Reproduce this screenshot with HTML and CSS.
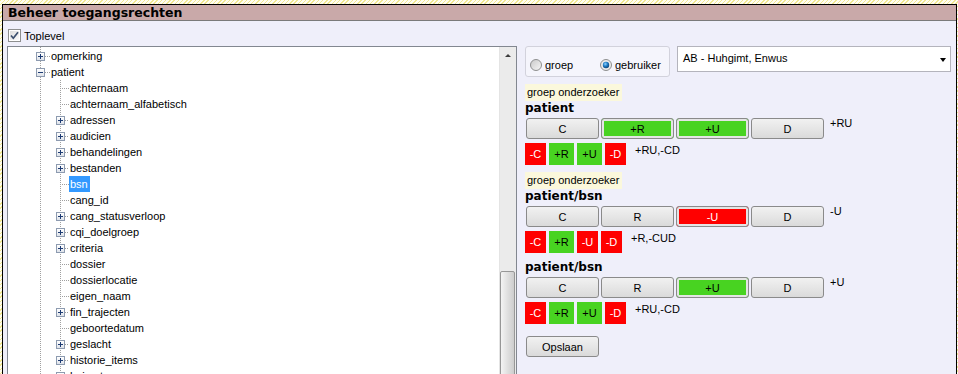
FILE: index.html
```html
<!DOCTYPE html>
<html>
  <head>
    <title>Beheer toegangsrechten</title>
    <link rel="stylesheet" href="styles.css">
  </head>
  <body>
    <div class="window">
      <div class="titlebar">Beheer toegangsrechten</div>

      <div class="toplevel">
        <svg class="check" width="13" height="13" viewBox="0 0 13 13">
          <defs>
            <linearGradient id="cbg" x1="0" y1="0" x2="1" y2="1">
              <stop offset="0" stop-color="#dcdcdc" />
              <stop offset="1" stop-color="#fbfbfb" />
            </linearGradient>
          </defs>
          <rect x="0.5" y="0.5" width="12" height="12" fill="#fff" stroke="#8e8f8f" />
          <rect x="2" y="2" width="9" height="9" fill="url(#cbg)" />
          <path d="M3 6.5 L5.3 9.2 L10 3.2" fill="none" stroke="#3b4f6e" stroke-width="1.7" />
        </svg>
        <span>Toplevel</span>
      </div>

      <div class="main">
        <!-- Tree with fields -->
        <div class="treebox">
          <ul class="tree">
            <li class="row d1"><span class="exp plus"></span><span class="dash"></span><span class="lbl">opmerking</span></li>
            <li class="row d1"><span class="exp"></span><span class="dash"></span><span class="lbl">patient</span></li>
            <li>
              <ul class="sub">
                <li class="row d2"><span class="stub"></span><span class="lbl">achternaam</span></li>
                <li class="row d2"><span class="stub"></span><span class="lbl">achternaam_alfabetisch</span></li>
                <li class="row d2"><span class="exp plus"></span><span class="dash"></span><span class="lbl">adressen</span></li>
                <li class="row d2"><span class="exp plus"></span><span class="dash"></span><span class="lbl">audicien</span></li>
                <li class="row d2"><span class="exp plus"></span><span class="dash"></span><span class="lbl">behandelingen</span></li>
                <li class="row d2"><span class="exp plus"></span><span class="dash"></span><span class="lbl">bestanden</span></li>
                <li class="row d2"><span class="stub"></span><span class="lbl selected">bsn</span></li>
                <li class="row d2"><span class="stub"></span><span class="lbl">cang_id</span></li>
                <li class="row d2"><span class="exp plus"></span><span class="dash"></span><span class="lbl">cang_statusverloop</span></li>
                <li class="row d2"><span class="exp plus"></span><span class="dash"></span><span class="lbl">cqi_doelgroep</span></li>
                <li class="row d2"><span class="exp plus"></span><span class="dash"></span><span class="lbl">criteria</span></li>
                <li class="row d2"><span class="stub"></span><span class="lbl">dossier</span></li>
                <li class="row d2"><span class="stub"></span><span class="lbl">dossierlocatie</span></li>
                <li class="row d2"><span class="stub"></span><span class="lbl">eigen_naam</span></li>
                <li class="row d2"><span class="exp plus"></span><span class="dash"></span><span class="lbl">fin_trajecten</span></li>
                <li class="row d2"><span class="stub"></span><span class="lbl">geboortedatum</span></li>
                <li class="row d2"><span class="exp plus"></span><span class="dash"></span><span class="lbl">geslacht</span></li>
                <li class="row d2"><span class="exp plus"></span><span class="dash"></span><span class="lbl">historie_items</span></li>
                <li class="row d2"><span class="exp plus"></span><span class="dash"></span><span class="lbl">huisarts</span></li>
              </ul>
            </li>
          </ul>
          <div class="scrollbar">
            <div class="arrow-up"></div>
            <div class="thumb"></div>
          </div>
        </div>

        <!-- Rights editor -->
        <div class="rights">
          <div class="topbar">
            <div class="groupbox">
              <label class="option">
                <svg width="12" height="12" viewBox="0 0 12 12">
                  <defs>
                    <linearGradient id="rbg" x1="0" y1="0" x2="1" y2="1">
                      <stop offset="0" stop-color="#c8c8c8" />
                      <stop offset="1" stop-color="#f8f8f8" />
                    </linearGradient>
                  </defs>
                  <circle cx="6" cy="6" r="5.5" fill="url(#rbg)" stroke="#8e8f8f" />
                </svg>
                <span>groep</span>
              </label>
              <label class="option">
                <svg width="12" height="12" viewBox="0 0 12 12">
                  <defs>
                    <radialGradient id="rdot" cx="0.4" cy="0.35" r="0.7">
                      <stop offset="0" stop-color="#8fd3ff" />
                      <stop offset="0.5" stop-color="#1d7bc4" />
                      <stop offset="1" stop-color="#0b3e6e" />
                    </radialGradient>
                  </defs>
                  <circle cx="6" cy="6" r="5.5" fill="#ececec" stroke="#8e8f8f" />
                  <circle cx="6" cy="6" r="3.2" fill="url(#rdot)" />
                </svg>
                <span>gebruiker</span>
              </label>
            </div>
            <div class="select">
              <span>AB - Huhgimt, Enwus</span>
              <span class="caret"></span>
            </div>
          </div>

          <div class="block">
            <div class="tag">groep onderzoeker</div>
            <div class="heading">patient</div>
            <div class="crud">
              <button class="btn">C</button>
              <button class="btn on">+R</button>
              <button class="btn on">+U</button>
              <button class="btn">D</button>
              <span class="note">+RU</span>
            </div>
            <div class="flags">
              <span class="flag deny">-C</span>
              <span class="flag allow wide">+R</span>
              <span class="flag allow wide">+U</span>
              <span class="flag deny">-D</span>
              <span class="note">+RU,-CD</span>
            </div>
          </div>

          <div class="block">
            <div class="tag">groep onderzoeker</div>
            <div class="heading">patient/bsn</div>
            <div class="crud">
              <button class="btn">C</button>
              <button class="btn">R</button>
              <button class="btn off">-U</button>
              <button class="btn">D</button>
              <span class="note">-U</span>
            </div>
            <div class="flags">
              <span class="flag deny">-C</span>
              <span class="flag allow wide">+R</span>
              <span class="flag deny">-U</span>
              <span class="flag deny">-D</span>
              <span class="note">+R,-CUD</span>
            </div>
          </div>

          <div class="block">
            <div class="heading">patient/bsn</div>
            <div class="crud">
              <button class="btn">C</button>
              <button class="btn">R</button>
              <button class="btn on">+U</button>
              <button class="btn">D</button>
              <span class="note">+U</span>
            </div>
            <div class="flags">
              <span class="flag deny">-C</span>
              <span class="flag allow wide">+R</span>
              <span class="flag allow wide">+U</span>
              <span class="flag deny">-D</span>
              <span class="note">+RU,-CD</span>
            </div>
          </div>

          <button class="btn save">Opslaan</button>
        </div>
      </div>
    </div>
  </body>
</html>
```

FILE: styles.css
```css
:root {
  --panel-bg: #efeffa;
  --title-bg: #c9a9a9;
  --green: #48d321;
  --red: #ff0000;
  --dots: #a0a0a0;
}

html,
body {
  height: 100%;
}

body {
  margin: 0;
  overflow: hidden;
  font-family: "Liberation Sans", Arial, sans-serif;
  font-size: 11px;
  color: #000;
  background: repeating-linear-gradient(135deg, #f1e892 0 1px, #fffdf0 1px 3px);
}

/* Window frame */
.window {
  display: flex;
  flex-direction: column;
  height: calc(100% - 5px);
  margin: 4px 1px 0 2px;
  border: 1px solid #000;
  border-bottom: none;
  background: var(--panel-bg);
}

.titlebar {
  height: 15px;
  line-height: 15px;
  padding-left: 5px;
  background: var(--title-bg);
  border-bottom: 1px solid #7a7a7a;
  font: bold 12.5px "DejaVu Sans", Verdana, sans-serif;
}

.toplevel {
  display: flex;
  align-items: center;
  gap: 3px;
  height: 25px;
  box-sizing: border-box;
  padding: 4px 0 0 5px;
}

.check {
  display: block;
}

.main {
  display: flex;
  flex: 1;
  min-height: 0;
  padding-left: 4px;
}

/* Tree view */
.treebox {
  display: flex;
  width: 510px;
  box-sizing: border-box;
  border: 1px solid #828790;
  border-bottom: none;
  background: #fff;
  overflow: hidden;
}

.tree,
.sub {
  list-style: none;
  margin: 0;
  padding: 0;
}

.tree {
  flex: 1;
  padding-top: 1px;
  background: linear-gradient(var(--dots) 50%, transparent 50%) 32px 0 / 1px 2px repeat-y;
}

.sub {
  background: linear-gradient(var(--dots) 50%, transparent 50%) 52px 0 / 1px 2px repeat-y;
}

.row {
  display: flex;
  align-items: center;
  height: 16px;
  white-space: nowrap;
}

.row.d1 {
  padding-left: 28px;
}

.row.d2 {
  padding-left: 48px;
}

.exp {
  position: relative;
  width: 9px;
  height: 9px;
  box-sizing: border-box;
  border: 1px solid #8d9bb0;
  background: linear-gradient(#ffffff, #dfe3ea);
}

.exp::before {
  content: "";
  position: absolute;
  left: 1px;
  top: 3px;
  width: 5px;
  height: 1px;
  background: #1d3b73;
}

.exp.plus::after {
  content: "";
  position: absolute;
  left: 3px;
  top: 1px;
  width: 1px;
  height: 5px;
  background: #1d3b73;
}

.dash,
.stub {
  height: 1px;
  background: linear-gradient(to right, var(--dots) 50%, transparent 50%) 0 0 / 2px 1px repeat-x;
}

.d1 .dash {
  width: 5px;
}

.d2 .dash {
  width: 4px;
}

.stub {
  width: 9px;
  margin-left: 4px;
}

.lbl {
  padding: 1px 2px 1px 1px;
  line-height: 14px;
}

.lbl.selected {
  background: #3399ff;
  color: #fff;
}

.scrollbar {
  width: 17px;
  background: #ebebeb;
  border-left: 1px solid #e4e4e4;
  box-sizing: border-box;
}

.arrow-up {
  position: relative;
  height: 17px;
}

.arrow-up::before {
  content: "";
  position: absolute;
  left: 5px;
  top: 7px;
  border-left: 3px solid transparent;
  border-right: 3px solid transparent;
  border-bottom: 3px solid #3c3c3c;
}

.thumb {
  height: 160px;
  margin: 207px 1px 0 0;
  border: 1px solid #979797;
  border-radius: 2px;
  background: linear-gradient(to right, #f4f4f4, #e2e2e2 45%, #cdcdcd);
}

/* Rights panel */
.rights {
  flex: 1;
  padding: 0 5px 0 8px;
}

.topbar {
  display: flex;
  gap: 7px;
  align-items: flex-start;
}

.groupbox {
  display: flex;
  align-items: center;
  width: 145px;
  height: 31px;
  box-sizing: border-box;
  padding: 6px 0 0 4px;
  border: 1px solid #d2d2dc;
  border-radius: 3px;
  background: #f5f5fc;
}

.option {
  display: flex;
  align-items: center;
  gap: 3px;
}

.option:first-child {
  width: 70px;
}

.option svg {
  display: block;
}

.select {
  display: flex;
  align-items: center;
  justify-content: space-between;
  flex: 1;
  height: 26px;
  box-sizing: border-box;
  padding: 0 4px 3px 5px;
  border: 1px solid #b4b4bc;
  background: #fff;
}

.caret {
  border-left: 3.5px solid transparent;
  border-right: 3.5px solid transparent;
  border-top: 4px solid #000;
  margin-top: 4px;
}

.block {
  margin-top: 7px;
}

.tag {
  display: inline-block;
  height: 17px;
  line-height: 17px;
  padding: 0 3px 0 2px;
  background: #fbf8dc;
}

.heading {
  height: 17px;
  line-height: 17px;
  font: bold 12px "DejaVu Sans", Verdana, sans-serif;
}

.crud,
.flags {
  display: flex;
  align-items: flex-start;
}

.crud {
  gap: 2px;
  padding-left: 1px;
}

.btn {
  width: 73px;
  height: 21px;
  padding: 0;
  border: 1px solid #8a8a8a;
  border-radius: 3px;
  background: linear-gradient(#f1f1f1, #e6e6e6 50%, #dadada);
  font: 11px "Liberation Sans", Arial, sans-serif;
  color: #000;
}

.btn.on {
  background: var(--green);
  box-shadow: inset 0 0 0 2px #e4e4e4;
}

.btn.off {
  background: var(--red);
  box-shadow: inset 0 0 0 2px #e4e4e4;
  color: #fff;
}

.note {
  margin-left: 4px;
  line-height: 13px;
}

.crud .note {
  margin-top: -1px;
}

.flags {
  gap: 3px;
  margin-top: 4px;
}

.flags .note {
  margin-top: 1px;
  margin-left: 6px;
}

.flag {
  width: 21px;
  height: 22px;
  line-height: 22px;
  text-align: center;
}

.flag.wide {
  width: 25px;
}

.flag.deny {
  background: var(--red);
  color: #fff;
}

.flag.allow {
  background: var(--green);
}

.save {
  display: block;
  margin: 12px 0 0 1px;
}
```
